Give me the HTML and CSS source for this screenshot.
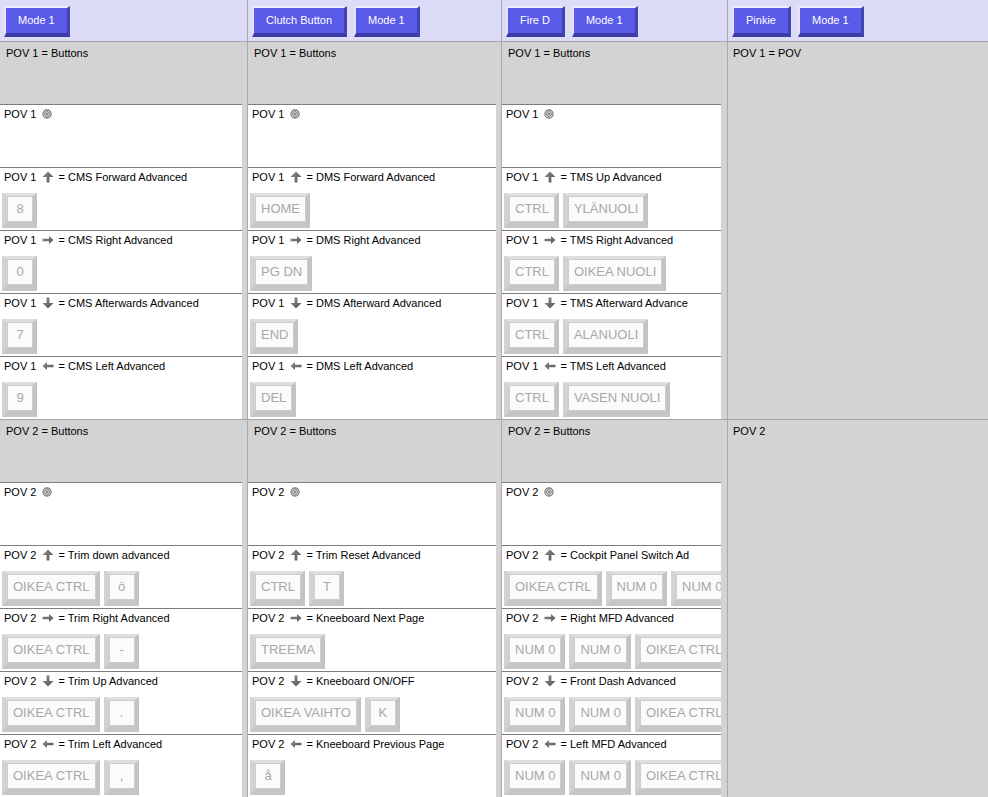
FILE: index.html
```html
<!DOCTYPE html>
<html>
<head>
  <title>POV Bindings</title>
  <link rel="stylesheet" href="styles.css">
</head>
<body>
  <svg class="defs" width="0" height="0">
    <defs>
      <linearGradient id="arrowFill" x1="0" y1="0" x2="1" y2="1">
        <stop offset="0" stop-color="#8a8a8a"/>
        <stop offset="1" stop-color="#555"/>
      </linearGradient>
      <symbol id="up" viewBox="0 0 12 12">
        <path d="M6 0.5 L11.5 6 L7.4 6 L7.4 11.5 L4.6 11.5 L4.6 6 L0.5 6 Z" fill="url(#arrowFill)"/>
      </symbol>
      <symbol id="down" viewBox="0 0 12 12">
        <path d="M6 11.5 L11.5 6 L7.4 6 L7.4 0.5 L4.6 0.5 L4.6 6 L0.5 6 Z" fill="url(#arrowFill)"/>
      </symbol>
      <symbol id="right" viewBox="0 0 12 12">
        <path d="M11.5 6 L7 2 L7 4.7 L0.5 4.7 L0.5 7.3 L7 7.3 L7 10 Z" fill="url(#arrowFill)"/>
      </symbol>
      <symbol id="left" viewBox="0 0 12 12">
        <path d="M0.5 6 L5 2 L5 4.7 L11.5 4.7 L11.5 7.3 L5 7.3 L5 10 Z" fill="url(#arrowFill)"/>
      </symbol>
      <symbol id="center" viewBox="0 0 10 10">
        <circle cx="5" cy="5" r="4.1" fill="#e6e6e6" stroke="#6f6f6f" stroke-width="1.1"/>
        <circle cx="5" cy="5" r="2.3" fill="#fff" stroke="#666" stroke-width="1"/>
        <circle cx="5" cy="5" r="0.9" fill="#555"/>
      </symbol>
    </defs>
  </svg>

  <div class="board">

    <!-- column 1 -->
    <div class="col col-1">
      <div class="col-head">
        <button class="btn">Mode 1</button>
      </div>
      <div class="group">
        <div class="group-title">POV 1 = Buttons</div>
        <div class="cell"><div class="cell-label">POV 1 <svg class="ico ico-c"><use href="#center"/></svg></div></div>
        <div class="cell">
          <div class="cell-label">POV 1 <svg class="ico"><use href="#up"/></svg> = CMS Forward Advanced</div>
          <div class="keys"><span class="key"><span class="face">8</span></span></div>
        </div>
        <div class="cell">
          <div class="cell-label">POV 1 <svg class="ico"><use href="#right"/></svg> = CMS Right Advanced</div>
          <div class="keys"><span class="key"><span class="face">0</span></span></div>
        </div>
        <div class="cell">
          <div class="cell-label">POV 1 <svg class="ico"><use href="#down"/></svg> = CMS Afterwards Advanced</div>
          <div class="keys"><span class="key"><span class="face">7</span></span></div>
        </div>
        <div class="cell">
          <div class="cell-label">POV 1 <svg class="ico"><use href="#left"/></svg> = CMS Left Advanced</div>
          <div class="keys"><span class="key"><span class="face">9</span></span></div>
        </div>
      </div>
      <div class="group">
        <div class="group-title">POV 2 = Buttons</div>
        <div class="cell"><div class="cell-label">POV 2 <svg class="ico ico-c"><use href="#center"/></svg></div></div>
        <div class="cell">
          <div class="cell-label">POV 2 <svg class="ico"><use href="#up"/></svg> = Trim down advanced</div>
          <div class="keys"><span class="key"><span class="face">OIKEA CTRL</span></span><span class="key"><span class="face">ö</span></span></div>
        </div>
        <div class="cell">
          <div class="cell-label">POV 2 <svg class="ico"><use href="#right"/></svg> = Trim Right Advanced</div>
          <div class="keys"><span class="key"><span class="face">OIKEA CTRL</span></span><span class="key"><span class="face">-</span></span></div>
        </div>
        <div class="cell">
          <div class="cell-label">POV 2 <svg class="ico"><use href="#down"/></svg> = Trim Up Advanced</div>
          <div class="keys"><span class="key"><span class="face">OIKEA CTRL</span></span><span class="key"><span class="face">.</span></span></div>
        </div>
        <div class="cell">
          <div class="cell-label">POV 2 <svg class="ico"><use href="#left"/></svg> = Trim Left Advanced</div>
          <div class="keys"><span class="key"><span class="face">OIKEA CTRL</span></span><span class="key"><span class="face">,</span></span></div>
        </div>
      </div>
    </div>

    <!-- column 2 -->
    <div class="col col-2">
      <div class="col-head">
        <button class="btn">Clutch Button</button>
        <button class="btn">Mode 1</button>
      </div>
      <div class="group">
        <div class="group-title">POV 1 = Buttons</div>
        <div class="cell"><div class="cell-label">POV 1 <svg class="ico ico-c"><use href="#center"/></svg></div></div>
        <div class="cell">
          <div class="cell-label">POV 1 <svg class="ico"><use href="#up"/></svg> = DMS Forward Advanced</div>
          <div class="keys"><span class="key"><span class="face">HOME</span></span></div>
        </div>
        <div class="cell">
          <div class="cell-label">POV 1 <svg class="ico"><use href="#right"/></svg> = DMS Right Advanced</div>
          <div class="keys"><span class="key"><span class="face">PG DN</span></span></div>
        </div>
        <div class="cell">
          <div class="cell-label">POV 1 <svg class="ico"><use href="#down"/></svg> = DMS Afterward Advanced</div>
          <div class="keys"><span class="key"><span class="face">END</span></span></div>
        </div>
        <div class="cell">
          <div class="cell-label">POV 1 <svg class="ico"><use href="#left"/></svg> = DMS Left Advanced</div>
          <div class="keys"><span class="key"><span class="face">DEL</span></span></div>
        </div>
      </div>
      <div class="group">
        <div class="group-title">POV 2 = Buttons</div>
        <div class="cell"><div class="cell-label">POV 2 <svg class="ico ico-c"><use href="#center"/></svg></div></div>
        <div class="cell">
          <div class="cell-label">POV 2 <svg class="ico"><use href="#up"/></svg> = Trim Reset Advanced</div>
          <div class="keys"><span class="key"><span class="face">CTRL</span></span><span class="key"><span class="face">T</span></span></div>
        </div>
        <div class="cell">
          <div class="cell-label">POV 2 <svg class="ico"><use href="#right"/></svg> = Kneeboard Next Page</div>
          <div class="keys"><span class="key"><span class="face">TREEMA</span></span></div>
        </div>
        <div class="cell">
          <div class="cell-label">POV 2 <svg class="ico"><use href="#down"/></svg> = Kneeboard ON/OFF</div>
          <div class="keys"><span class="key"><span class="face">OIKEA VAIHTO</span></span><span class="key"><span class="face">K</span></span></div>
        </div>
        <div class="cell">
          <div class="cell-label">POV 2 <svg class="ico"><use href="#left"/></svg> = Kneeboard Previous Page</div>
          <div class="keys"><span class="key"><span class="face">å</span></span></div>
        </div>
      </div>
    </div>

    <!-- column 3 -->
    <div class="col col-3">
      <div class="col-head">
        <button class="btn">Fire D</button>
        <button class="btn">Mode 1</button>
      </div>
      <div class="group">
        <div class="group-title">POV 1 = Buttons</div>
        <div class="cell"><div class="cell-label">POV 1 <svg class="ico ico-c"><use href="#center"/></svg></div></div>
        <div class="cell">
          <div class="cell-label">POV 1 <svg class="ico"><use href="#up"/></svg> = TMS Up Advanced</div>
          <div class="keys"><span class="key"><span class="face">CTRL</span></span><span class="key"><span class="face">YLÄNUOLI</span></span></div>
        </div>
        <div class="cell">
          <div class="cell-label">POV 1 <svg class="ico"><use href="#right"/></svg> = TMS Right Advanced</div>
          <div class="keys"><span class="key"><span class="face">CTRL</span></span><span class="key"><span class="face">OIKEA NUOLI</span></span></div>
        </div>
        <div class="cell">
          <div class="cell-label">POV 1 <svg class="ico"><use href="#down"/></svg> = TMS Afterward Advance</div>
          <div class="keys"><span class="key"><span class="face">CTRL</span></span><span class="key"><span class="face">ALANUOLI</span></span></div>
        </div>
        <div class="cell">
          <div class="cell-label">POV 1 <svg class="ico"><use href="#left"/></svg> = TMS Left Advanced</div>
          <div class="keys"><span class="key"><span class="face">CTRL</span></span><span class="key"><span class="face">VASEN NUOLI</span></span></div>
        </div>
      </div>
      <div class="group">
        <div class="group-title">POV 2 = Buttons</div>
        <div class="cell"><div class="cell-label">POV 2 <svg class="ico ico-c"><use href="#center"/></svg></div></div>
        <div class="cell">
          <div class="cell-label">POV 2 <svg class="ico"><use href="#up"/></svg> = Cockpit Panel Switch Ad</div>
          <div class="keys"><span class="key"><span class="face">OIKEA CTRL</span></span><span class="key"><span class="face">NUM 0</span></span><span class="key"><span class="face">NUM 0</span></span></div>
        </div>
        <div class="cell">
          <div class="cell-label">POV 2 <svg class="ico"><use href="#right"/></svg> = Right MFD Advanced</div>
          <div class="keys"><span class="key"><span class="face">NUM 0</span></span><span class="key"><span class="face">NUM 0</span></span><span class="key"><span class="face">OIKEA CTRL</span></span></div>
        </div>
        <div class="cell">
          <div class="cell-label">POV 2 <svg class="ico"><use href="#down"/></svg> = Front Dash Advanced</div>
          <div class="keys"><span class="key"><span class="face">NUM 0</span></span><span class="key"><span class="face">NUM 0</span></span><span class="key"><span class="face">OIKEA CTRL</span></span></div>
        </div>
        <div class="cell">
          <div class="cell-label">POV 2 <svg class="ico"><use href="#left"/></svg> = Left MFD Advanced</div>
          <div class="keys"><span class="key"><span class="face">NUM 0</span></span><span class="key"><span class="face">NUM 0</span></span><span class="key"><span class="face">OIKEA CTRL</span></span></div>
        </div>
      </div>
    </div>

    <!-- column 4 -->
    <div class="col col-4">
      <div class="col-head">
        <button class="btn">Pinkie</button>
        <button class="btn">Mode 1</button>
      </div>
      <div class="group">
        <div class="group-title">POV 1 = POV</div>
      </div>
      <div class="group">
        <div class="group-title">POV 2</div>
      </div>
    </div>

  </div>
</body>
</html>
```

FILE: styles.css
```css
body {
  margin: 0;
  padding: 0;
  background-color: #d3d3d3;
  font-family: "Liberation Sans", Arial, sans-serif;
  font-size: 11px;
  color: #000;
  overflow: hidden;
}

.defs {
  position: absolute;
  width: 0;
  height: 0;
}

.board {
  display: flex;
  width: 988px;
  height: 797px;
  overflow: hidden;
}

.col {
  display: flex;
  flex-direction: column;
  flex-shrink: 0;
  border-right: 1px solid #a9a9a9;
  box-sizing: border-box;
}

.col-1 { width: 248px; }
.col-2 { width: 254px; }
.col-3 { width: 226px; }
.col-4 { width: 260px; border-right: none; }

.col-head {
  display: flex;
  align-items: flex-start;
  gap: 7px;
  height: 41px;
  padding: 6px 0 0 4px;
  box-sizing: border-box;
  background-color: #dddcf6;
}

.btn {
  height: 31px;
  padding: 0 12px;
  margin: 0;
  border-style: solid;
  border-width: 2px 3px 4px 2px;
  border-color: #ececfc #4343b2 #3c3ca6 #e4e4fa;
  background-color: #5a5ae8;
  color: #fff;
  font-family: "Liberation Sans", Arial, sans-serif;
  font-size: 11px;
  line-height: 25px;
  white-space: nowrap;
  cursor: pointer;
}

.group {
  height: 378px;
  border-top: 1px solid #a5a5a5;
  box-sizing: border-box;
  overflow: hidden;
}

.group-title {
  height: 62px;
  padding: 4px 6px 0;
  box-sizing: border-box;
  line-height: 14px;
}

.col-4 .group-title {
  padding-left: 5px;
}

.cell {
  height: 63px;
  margin-right: 5px;
  border-top: 1px solid #7d7d7d;
  background-color: #fff;
  box-sizing: border-box;
  overflow: hidden;
}

.col-3 .cell {
  margin-right: 6px;
}

.cell-label {
  padding: 2px 4px 0;
  line-height: 14px;
  white-space: nowrap;
}

.ico {
  width: 12px;
  height: 12px;
  margin: 0 1px 0 3px;
  vertical-align: -2px;
}

.ico-c {
  width: 10px;
  height: 10px;
  vertical-align: -1px;
}

.keys {
  display: flex;
  gap: 4px;
  padding: 9px 0 0 2px;
}

.key {
  display: inline-block;
  flex-shrink: 0;
  border-style: solid;
  border-width: 3px 4px 6px 5px;
  border-color: #dedede #c3c3c3 #c6c6c6 #d2d2d2;
}

.face {
  display: block;
  min-width: 26px;
  height: 26px;
  padding: 0 5px;
  box-sizing: border-box;
  border: 1px solid #cdcdcd;
  background-color: #fbfbfb;
  color: #a8a8a8;
  font-size: 13px;
  line-height: 24px;
  text-align: center;
  white-space: nowrap;
}
```
